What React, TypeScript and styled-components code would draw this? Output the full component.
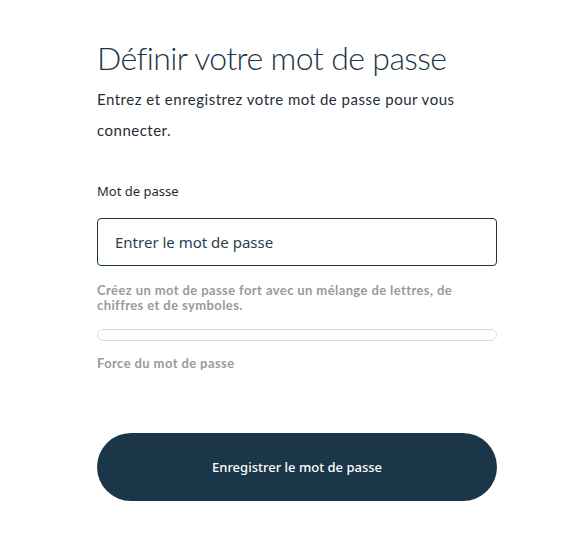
import styled, { createGlobalStyle } from "styled-components"

const Global = createGlobalStyle`
  body {
    margin: 0;
    background: #fff;
    font-family: "Lato", "Noto Sans", sans-serif;
  }
`

const Page = styled.div`
  width: 400px;
  margin: 0 0 0 97px;
  padding-top: 37px;
  display: flex;
  flex-direction: column;
`

const Title = styled.h1`
  margin: 0;
  font-family: "Lato", sans-serif;
  font-weight: 300;
  font-size: 32px;
  line-height: 42px;
  color: #1b3649;
  letter-spacing: -0.6px;
`

const Intro = styled.p`
  margin: 5px 0 0;
  font-size: 15px;
  line-height: 31px;
  letter-spacing: 0.5px;
  color: #1f2d38;
`

const Label = styled.label`
  margin-top: 36px;
  font-family: "Noto Sans", sans-serif;
  font-size: 13px;
  color: #1f2d38;
`

const Input = styled.input`
  margin-top: 18px;
  box-sizing: border-box;
  width: 400px;
  height: 48px;
  padding: 0 17px;
  border: 1px solid #1b3649;
  border-radius: 4px;
  font-family: "Noto Sans", sans-serif;
  font-size: 15px;
  color: #1f2d38;
  outline: none;
  &::placeholder {
    color: #2c3e4c;
  }
`

const Hint = styled.p<{ $top: number }>`
  margin: ${(p) => p.$top}px 0 0;
  font-family: "Lato", sans-serif;
  font-weight: 700;
  font-size: 13px;
  line-height: 15px;
  letter-spacing: 0.4px;
  color: #9a9a9a;
`

const Meter = styled.div`
  margin-top: 16px;
  box-sizing: border-box;
  height: 12px;
  border: 1px solid #dcdcdc;
  border-radius: 6px;
`

const Button = styled.button`
  margin-top: 62px;
  height: 68px;
  width: 400px;
  border: none;
  border-radius: 34px;
  background: #1b3649;
  color: #fff;
  font-family: "Noto Sans", sans-serif;
  font-weight: 500;
  font-size: 13px;
  cursor: pointer;
`

export default function App() {
  return (
    <>
      <Global />
      <Page>
        <Title>Définir votre mot de passe</Title>
        <Intro>Entrez et enregistrez votre mot de passe pour vous connecter.</Intro>
        <Label>Mot de passe</Label>
        <Input type="password" placeholder="Entrer le mot de passe" />
        <Hint $top={17}>Créez un mot de passe fort avec un mélange de lettres, de chiffres et de symboles.</Hint>
        <Meter />
        <Hint $top={15}>Force du mot de passe</Hint>
        <Button>Enregistrer le mot de passe</Button>
      </Page>
    </>
  )
}
